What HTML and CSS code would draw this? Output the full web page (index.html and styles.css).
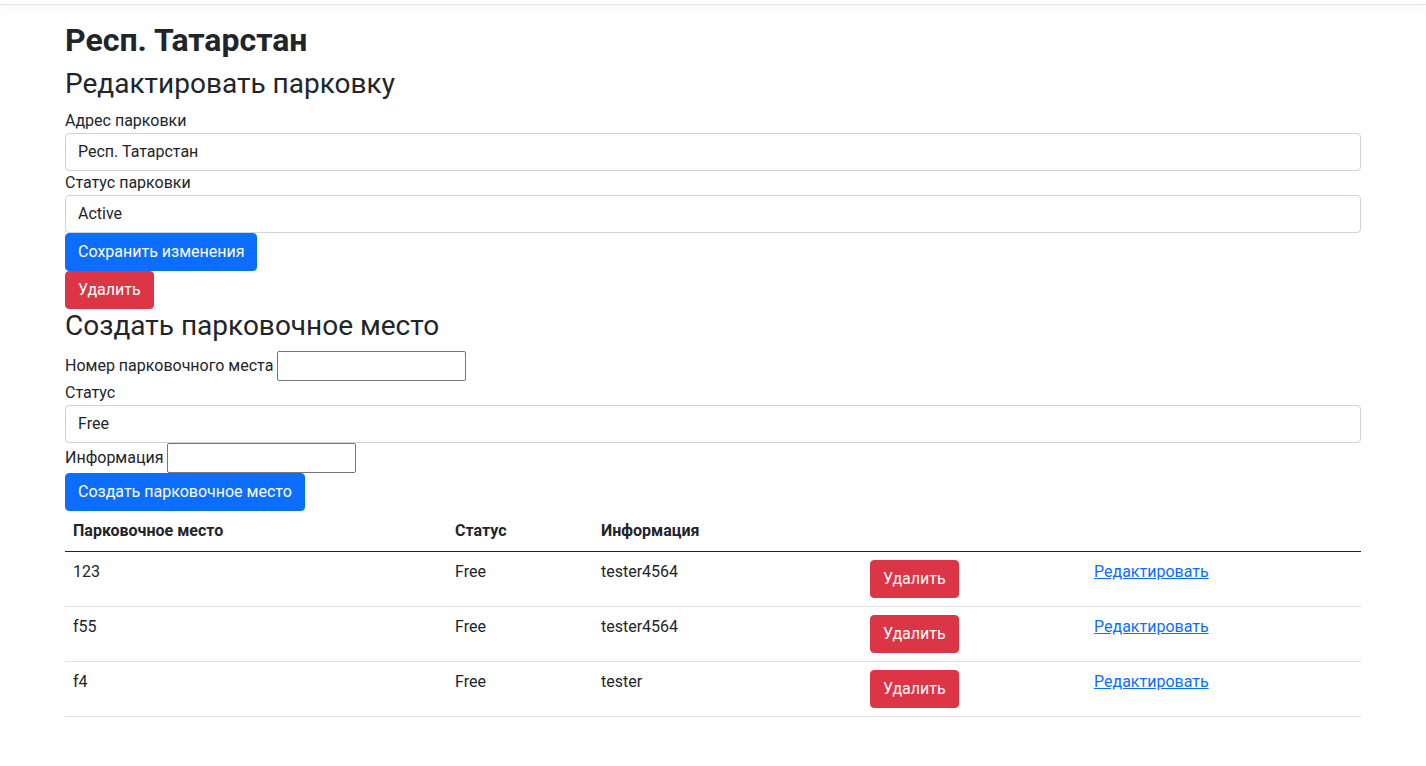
FILE: index.html
```html
<!DOCTYPE html>
<html lang="ru">
<head>
<meta charset="utf-8">
<title>Редактировать парковку</title>
<link rel="stylesheet" href="styles.css">
</head>
<body>
<header class="topbar"></header>
<main class="container">
  <h2 class="title">Респ. Татарстан</h2>
  <h3 class="subtitle">Редактировать парковку</h3>
  <form class="form">
    <label class="label">Адрес парковки</label>
    <input class="control" type="text" value="Респ. Татарстан">
    <label class="label">Статус парковки</label>
    <input class="control" type="text" value="Active">
    <div><button type="button" class="btn btn-primary">Сохранить изменения</button></div>
    <div><button type="button" class="btn btn-danger">Удалить</button></div>
  </form>
  <h3 class="subtitle">Создать парковочное место</h3>
  <form class="form">
    <div class="inline-row"><label class="label">Номер парковочного места</label> <input class="plain" type="text"></div>
    <label class="label">Статус</label>
    <input class="control" type="text" value="Free">
    <div class="inline-row"><label class="label">Информация</label> <input class="plain" type="text"></div>
    <div><button type="button" class="btn btn-primary">Создать парковочное место</button></div>
  </form>
  <table class="table">
    <colgroup>
      <col class="c1"><col class="c2"><col class="c3"><col class="c4"><col class="c5">
    </colgroup>
    <thead>
      <tr><th>Парковочное место</th><th>Статус</th><th>Информация</th><th></th><th></th></tr>
    </thead>
    <tbody>
      <tr><td>123</td><td>Free</td><td>tester4564</td><td><button type="button" class="btn btn-danger">Удалить</button></td><td><a class="link" href="#">Редактировать</a></td></tr>
      <tr><td>f55</td><td>Free</td><td>tester4564</td><td><button type="button" class="btn btn-danger">Удалить</button></td><td><a class="link" href="#">Редактировать</a></td></tr>
      <tr><td>f4</td><td>Free</td><td>tester</td><td><button type="button" class="btn btn-danger">Удалить</button></td><td><a class="link" href="#">Редактировать</a></td></tr>
    </tbody>
  </table>
</main>
</body>
</html>
```
FILE: styles.css
```css
* { box-sizing: border-box; }
body {
  margin: 0;
  font-family: Roboto, "Noto Sans", sans-serif;
  font-size: 16px;
  line-height: 1.5;
  color: #212529;
  background: #fff;
}
.topbar {
  height: 5px;
  border-bottom: 1px solid #e5e5e5;
  box-shadow: 0 4px 12px rgba(0,0,0,.05);
  margin-bottom: 16px;
}
.container {
  width: 1320px;
  margin: 0 auto;
  padding: 0 12px;
}
.title {
  margin: 0 0 8px;
  font-size: 32px;
  line-height: 1.2;
  font-weight: 700;
}
.subtitle {
  margin: 0 0 8px;
  font-size: 28px;
  line-height: 1.2;
  font-weight: 400;
}
.form { margin: 0; }
.label { display: inline-block; }
.control {
  display: block;
  width: 100%;
  padding: 6px 12px;
  font: inherit;
  line-height: 1.5;
  color: #212529;
  background: #fff;
  border: 1px solid #ced4da;
  border-radius: 4px;
  margin: 0;
}
.plain {
  font: inherit;
  line-height: inherit;
  margin: 0;
  width: 189px;
  padding: 1px 2px;
  border: 1px solid #767676;
  border-radius: 2px;
  height: 30px;
  vertical-align: baseline;
}
.btn {
  display: inline-block;
  font: inherit;
  line-height: 1.5;
  padding: 6px 12px;
  border: 1px solid transparent;
  border-radius: 4px;
  color: #fff;
  cursor: pointer;
  margin: 0;
}
.btn-primary { background: #0d6efd; border-color: #0d6efd; }
.btn-danger { background: #dc3545; border-color: #dc3545; }
.table {
  width: 100%;
  border-collapse: collapse;
  margin-bottom: 16px;
}
.c1 { width: 382px; }
.c2 { width: 146px; }
.c3 { width: 269px; }
.c4 { width: 224px; }
.c5 { width: 275px; }
.table th, .table td {
  padding: 8px;
  text-align: left;
  vertical-align: top;
  border-bottom: 1px solid #dee2e6;
}
.table th { font-weight: 700; border-bottom: 1px solid #212529; }
.link { color: #0d6efd; text-decoration: underline; }
```
